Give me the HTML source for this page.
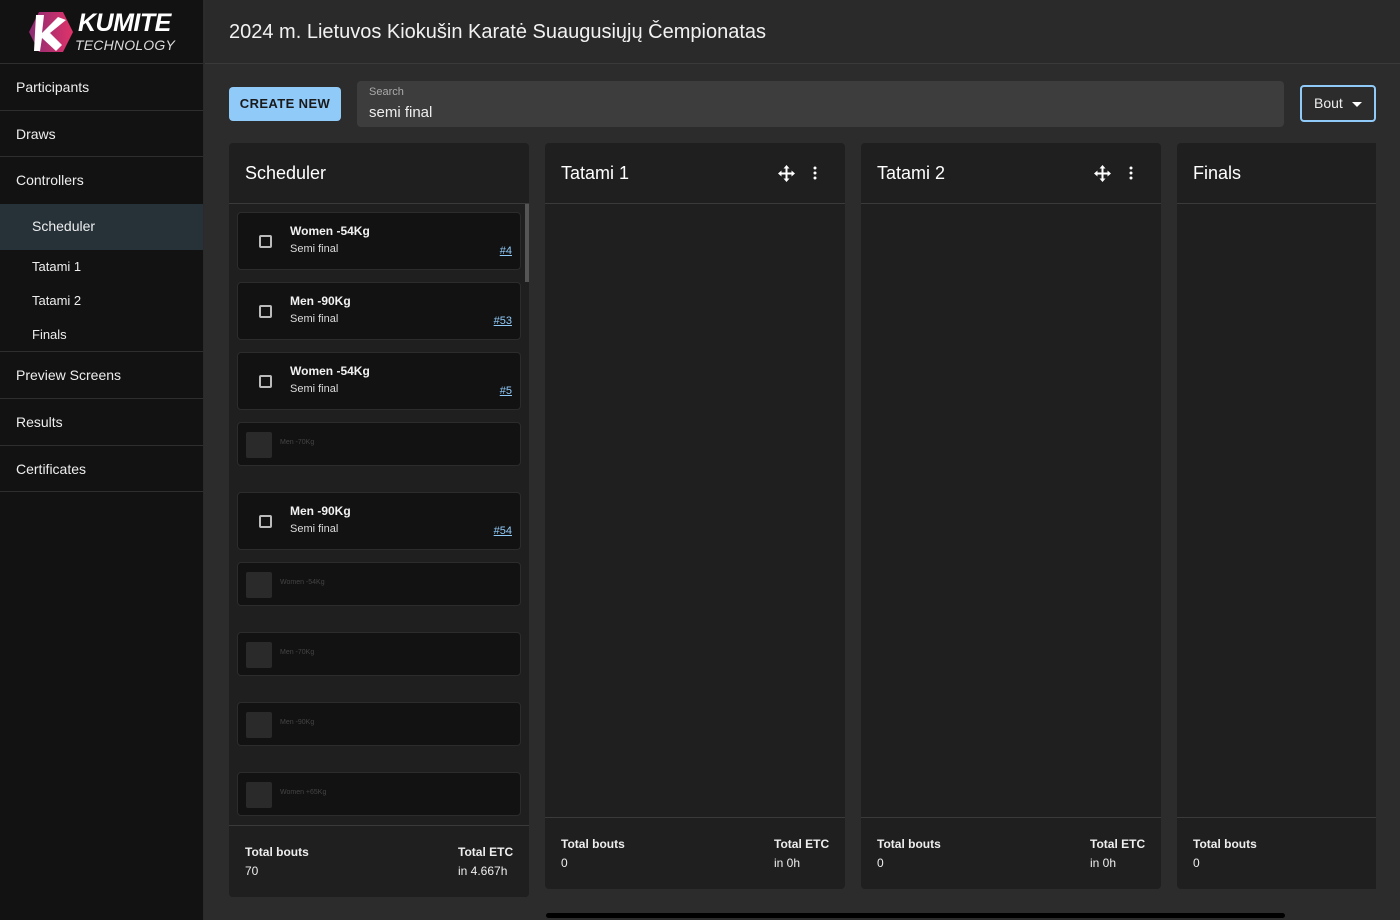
<!DOCTYPE html>
<html><head><meta charset="utf-8"><style>
*{box-sizing:border-box;margin:0;padding:0}
body{width:1400px;height:920px;overflow:hidden;background:#2c2c2c;font-family:"Liberation Sans",sans-serif;color:#fff;position:relative}
.sb{position:absolute;left:0;top:0;width:204px;height:920px;background:#121212;border-right:1px solid #2a2a2a}
.sb .logo{height:64px;border-bottom:1px solid #2e2e2e;position:relative}
.sb .it{height:47px;border-bottom:1px solid #2e2e2e;padding-left:16px;font-size:14px;line-height:46px;color:#eee}
.sb .sub{padding-left:32px;font-size:13px;height:34px;line-height:34px;color:#eee}
.sb .act{background:#263238;height:46px;line-height:44px;font-size:14px}
.hdr{position:absolute;left:205px;top:0;right:0;height:64px;border-bottom:1px solid #3a3a3a;background:#2a2a2a}
.hdr h1{font-weight:normal;font-size:20px;position:absolute;left:24px;top:21px;color:#f2f2f2}
.btn{position:absolute;left:229px;top:87px;width:112px;height:34px;background:#90caf9;border-radius:4px;color:#1a1a1a;font-size:13px;font-weight:bold;text-align:center;line-height:34px;letter-spacing:.4px}
.search{position:absolute;left:357px;top:81px;width:927px;height:46px;background:#3d3d3d;border-radius:4px}
.search .l{position:absolute;left:12px;top:5px;font-size:11px;color:#aaa}
.search .v{position:absolute;left:12px;top:23px;font-size:15px;color:#eee}
.bout{position:absolute;left:1300px;top:85px;width:76px;height:37px;border:2px solid #90caf9;border-radius:4px;font-size:14px;line-height:33px;padding-left:12px;color:#eee}
.bout:after{content:"";position:absolute;right:12px;top:15px;border:5px solid transparent;border-top-color:#fff;border-bottom:0}
.panel{position:absolute;top:143px;background:#1f1f1f;border-radius:4px;overflow:hidden}
.panel .ph{height:61px;border-bottom:1px solid #3a3a3a;padding-left:16px;font-size:18px;line-height:60px;position:relative}
.panel .pf{position:absolute;left:0;right:0;bottom:0;border-top:1px solid #3a3a3a;font-size:12px}
.pf b{position:absolute;font-weight:bold;color:#eee}
.pf span{position:absolute;color:#eee}
.card{position:absolute;left:8px;width:284px;height:58px;background:#121212;border:1px solid #2c2c2c;border-radius:4px}
.card .cb{position:absolute;left:21px;top:22px;width:13px;height:13px;border:2px solid #bbb;border-radius:2px}
.card .t{position:absolute;left:52px;top:11px;font-size:12px;font-weight:bold;color:#f2f2f2}
.card .s{position:absolute;left:52px;top:30px;font-size:11px;color:#ddd}
.card .n{position:absolute;right:8px;top:32px;font-size:11px;color:#90caf9;text-decoration:underline}
.ph2{height:44px}
.ph2 .sq{position:absolute;left:8px;top:9px;width:26px;height:26px;background:#2a2a2a;border-radius:2px}
.ph2 .tx{position:absolute;left:42px;top:16px;font-size:7px;color:#444}
</style></head><body>
<div class="sb">
 <div class="logo">
  <svg style="position:absolute;left:28px;top:11px" width="46" height="42" viewBox="0 0 46 42"><defs><linearGradient id="g" x1="0" x2="1"><stop offset="0" stop-color="#8a2b72"/><stop offset="1" stop-color="#e0336a"/></linearGradient></defs><polygon points="11,1 35,1 45,21 35,41 11,41 1,21" fill="url(#g)"/><path d="M8 4 L16 4 L14 22 L30 6 L38 9 L22 22 L34 34 L28 40 L14 27 L12 40 L6 40 Z" fill="#fff"/></svg>
  <div style="position:absolute;left:78px;top:9px;font-size:25px;font-weight:bold;font-style:italic;letter-spacing:-.5px">KUMITE</div>
  <div style="position:absolute;left:75px;top:37px;font-size:14px;font-style:italic;color:#ddd;letter-spacing:.2px">TECHNOLOGY</div>
 </div>
 <div class="it">Participants</div>
 <div class="it" style="height:46px">Draws</div>
 <div class="it" style="border-bottom:0">Controllers</div>
 <div class="sub act">Scheduler</div>
 <div style="border-bottom:1px solid #2e2e2e;height:102px">
  <div class="sub">Tatami 1</div><div class="sub">Tatami 2</div><div class="sub">Finals</div>
 </div>
 <div class="it">Preview Screens</div>
 <div class="it">Results</div>
 <div class="it" style="height:46px">Certificates</div>
</div>
<div class="hdr"><h1>2024 m. Lietuvos Kiokušin Karatė Suaugusiųjų Čempionatas</h1></div>
<div class="btn">CREATE NEW</div>
<div class="search"><div class="l">Search</div><div class="v">semi final</div></div>
<div class="bout">Bout</div>

<div class="panel" style="left:229px;width:300px;height:754px">
 <div class="ph">Scheduler</div>
 <div style="position:absolute;left:296px;top:61px;width:4px;height:78px;background:#555"></div>
 <div class="card" style="top:69px"><div class="cb"></div><div class="t">Women -54Kg</div><div class="s">Semi final</div><div class="n">#4</div></div>
 <div class="card" style="top:139px"><div class="cb"></div><div class="t">Men -90Kg</div><div class="s">Semi final</div><div class="n">#53</div></div>
 <div class="card" style="top:209px"><div class="cb"></div><div class="t">Women -54Kg</div><div class="s">Semi final</div><div class="n">#5</div></div>
 <div class="card ph2" style="top:279px"><div class="sq"></div><div class="tx">Men -70Kg</div></div>
 <div class="card" style="top:349px"><div class="cb"></div><div class="t">Men -90Kg</div><div class="s">Semi final</div><div class="n">#54</div></div>
 <div class="card ph2" style="top:419px"><div class="sq"></div><div class="tx">Women -54Kg</div></div>
 <div class="card ph2" style="top:489px"><div class="sq"></div><div class="tx">Men -70Kg</div></div>
 <div class="card ph2" style="top:559px"><div class="sq"></div><div class="tx">Men -90Kg</div></div>
 <div class="card ph2" style="top:629px"><div class="sq"></div><div class="tx">Women +65Kg</div></div>
 <div class="pf" style="height:72px;background:#1f1f1f"><b style="left:16px;top:19px">Total bouts</b><span style="left:16px;top:38px">70</span><b style="left:229px;top:19px">Total ETC</b><span style="left:229px;top:38px">in 4.667h</span></div>
</div>

<div class="panel" style="left:545px;width:300px;height:746px">
 <div class="ph">Tatami 1
  <svg style="position:absolute;left:233px;top:22px" width="17" height="17" viewBox="0 0 17 17" fill="#fff"><path d="M8.5 0 L11.5 3.5 L9.5 3.5 L9.5 7.5 L13.5 7.5 L13.5 5.5 L17 8.5 L13.5 11.5 L13.5 9.5 L9.5 9.5 L9.5 13.5 L11.5 13.5 L8.5 17 L5.5 13.5 L7.5 13.5 L7.5 9.5 L3.5 9.5 L3.5 11.5 L0 8.5 L3.5 5.5 L3.5 7.5 L7.5 7.5 L7.5 3.5 L5.5 3.5 Z"/></svg>
  <svg style="position:absolute;left:268px;top:23px" width="4" height="14" fill="#fff"><circle cx="2" cy="2" r="1.5"/><circle cx="2" cy="7" r="1.5"/><circle cx="2" cy="12" r="1.5"/></svg>
 </div>
 <div class="pf" style="height:72px"><b style="left:16px;top:19px">Total bouts</b><span style="left:16px;top:38px">0</span><b style="left:229px;top:19px">Total ETC</b><span style="left:229px;top:38px">in 0h</span></div>
</div>
<div class="panel" style="left:861px;width:300px;height:746px">
 <div class="ph">Tatami 2
  <svg style="position:absolute;left:233px;top:22px" width="17" height="17" viewBox="0 0 17 17" fill="#fff"><path d="M8.5 0 L11.5 3.5 L9.5 3.5 L9.5 7.5 L13.5 7.5 L13.5 5.5 L17 8.5 L13.5 11.5 L13.5 9.5 L9.5 9.5 L9.5 13.5 L11.5 13.5 L8.5 17 L5.5 13.5 L7.5 13.5 L7.5 9.5 L3.5 9.5 L3.5 11.5 L0 8.5 L3.5 5.5 L3.5 7.5 L7.5 7.5 L7.5 3.5 L5.5 3.5 Z"/></svg>
  <svg style="position:absolute;left:268px;top:23px" width="4" height="14" fill="#fff"><circle cx="2" cy="2" r="1.5"/><circle cx="2" cy="7" r="1.5"/><circle cx="2" cy="12" r="1.5"/></svg>
 </div>
 <div class="pf" style="height:72px"><b style="left:16px;top:19px">Total bouts</b><span style="left:16px;top:38px">0</span><b style="left:229px;top:19px">Total ETC</b><span style="left:229px;top:38px">in 0h</span></div>
</div>
<div class="panel" style="left:1177px;width:199px;height:746px;border-radius:4px 0 0 4px">
 <div class="ph">Finals</div>
 <div class="pf" style="height:72px"><b style="left:16px;top:19px">Total bouts</b><span style="left:16px;top:38px">0</span></div>
</div>
<div style="position:absolute;left:546px;top:913px;width:739px;height:5px;background:#000;border-radius:3px"></div>
</body></html>
